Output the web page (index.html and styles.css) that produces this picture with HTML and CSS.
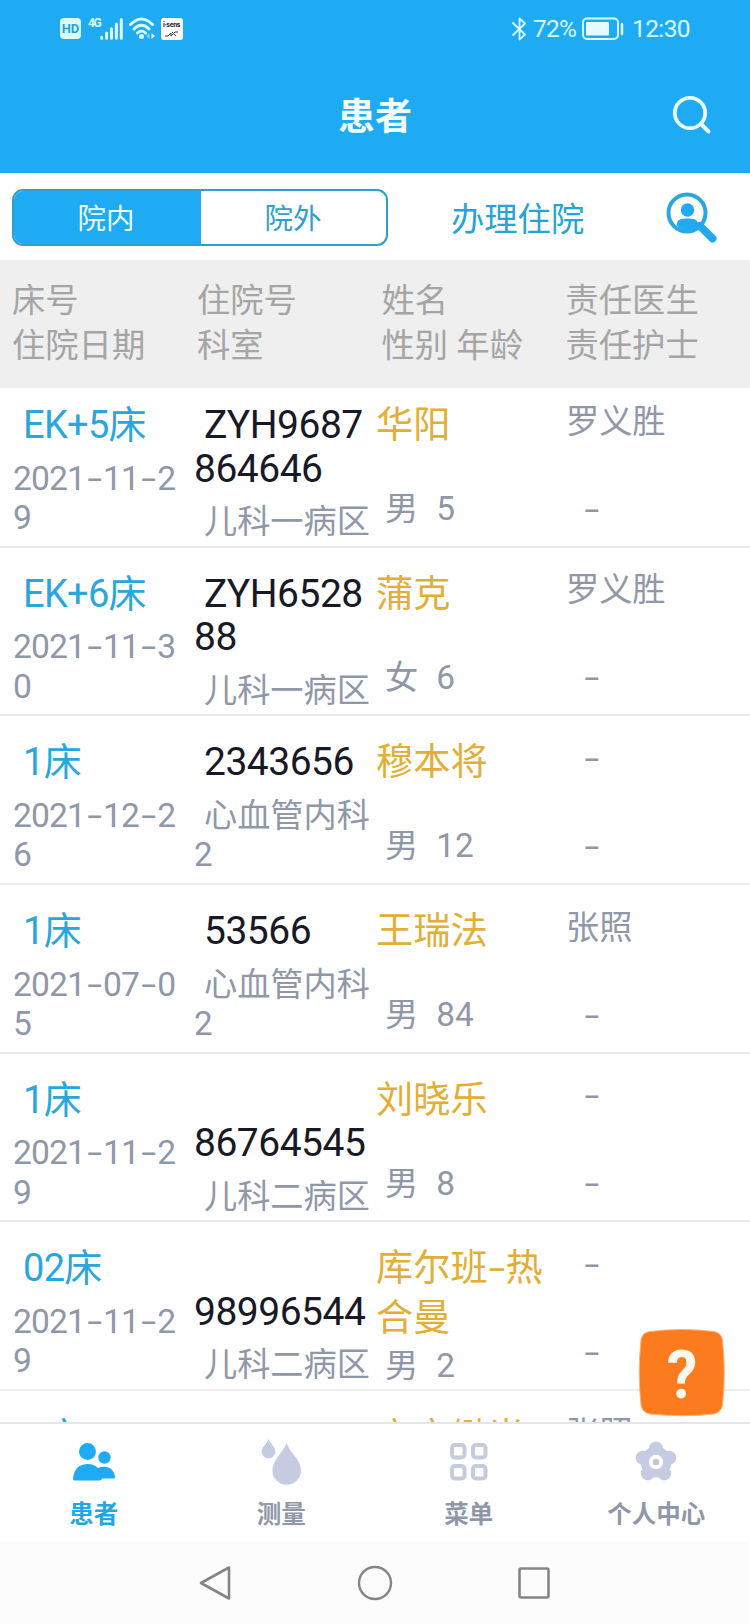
FILE: index.html
```html
<!DOCTYPE html>
<html lang="zh-CN">
<head>
    <meta charset="UTF-8">
    <meta name="viewport" content="width=device-width, initial-scale=1.0">
    <title>患者</title>
    <link rel="stylesheet" href="styles.css">
</head>
<body>
    <div class="top">
        <div class="status">
            <div class="status-left">
                <span class="hd">HD</span>
                <span class="net">4G</span>
                <svg class="signal" width="23" height="22" viewBox="0 0 23 22">
                    <path d="M1.7 19.2v1M6.6 15v5.3M11.5 10.800v9.500M16.400 6v14.300M21.300 1.500v18.800" stroke="#d9fbff" stroke-width="3" stroke-linecap="round"/>
                </svg>
                <svg class="wifi" width="27" height="23" viewBox="0 0 27 23">
                    <path d="M1.500 7.500Q12.500 -3.500 23.500 7.500M5 12Q12.500 4.500 20 12M8.500 16Q12.500 12 16.500 16" fill="none" stroke="#d9fbff" stroke-width="2.900" stroke-linecap="round"/>
                    <circle cx="12.500" cy="19.500" r="2.500" fill="#d9fbff"/>
                    <path d="M20.500 16v6l-3.500-3z" fill="#7fd3fa"/>
                    <path d="M22.500 16v6l3.500-3z" fill="#d9fbff"/>
                </svg>
                <span class="sens"><b>i·sens</b>
                    <svg width="18" height="6" viewBox="0 0 18 6"><path d="M2 5h3l3-3v3l4-4h3M9 1l4 4" fill="none" stroke="#334" stroke-width="1"/></svg>
                </span>
            </div>
            <div class="status-right">
                <svg width="16" height="24" viewBox="0 0 16 24">
                    <path d="M1.500 5.500L14 17.500L8.500 22.500V1.500L14 6.500L1.500 18.500" fill="none" stroke="#d9fbff" stroke-width="1.800" stroke-linejoin="round"/>
                </svg>
                <span class="percent">72%</span>
                <svg class="battery" width="42" height="24" viewBox="0 0 42 24">
                    <rect x="1" y="1.500" width="35" height="20.500" rx="4" fill="none" stroke="#d9fbff" stroke-width="2"/>
                    <rect x="4" y="5" width="23" height="13.500" rx="1" fill="#e6fbff"/>
                    <path d="M40 7v10" stroke="#d9fbff" stroke-width="2.500" stroke-linecap="round"/>
                </svg>
                <span class="clock">12:30</span>
            </div>
        </div>
        <div class="title-bar">
            <h1>患者</h1>
            <svg class="search" width="40" height="40" viewBox="0 0 40 40">
                <circle cx="18" cy="18" r="15.200" fill="none" stroke="#e9fdff" stroke-width="3.800"/>
                <path d="M29 29l7.500 7.500" stroke="#e9fdff" stroke-width="4" stroke-linecap="round"/>
            </svg>
        </div>
    </div>

    <div class="tools">
        <div class="switch">
            <div class="switch-item on">院内</div>
            <div class="switch-item">院外</div>
        </div>
        <a class="admit">办理住院</a>
        <svg class="find" width="52" height="52" viewBox="0 0 52 52">
            <circle cx="21" cy="21" r="18.500" fill="none" stroke="#2aa7e0" stroke-width="4"/>
            <circle cx="21.500" cy="18" r="6.700" fill="#1fabf3"/>
            <path d="M10.500 33c1-6 4.500-6.500 11-6.500s10 .500 11 6.500c-6 8-16 8-22 0z" fill="#1fabf3"/>
            <path d="M34 34l12.500 12.500" stroke="#22a9ea" stroke-width="8" stroke-linecap="round"/>
        </svg>
    </div>

    <div class="head">
        <div>床号<br>住院日期</div>
        <div>住院号<br>科室</div>
        <div>姓名<br>性别 年龄</div>
        <div>责任医生<br>责任护士</div>
    </div>

    <div class="list">
        <div class="rows">
            <div class="row">
                <div class="col"><div class="bed">EK+5床</div><div class="date">2021<i>-</i>11<i>-</i>2<br>9</div></div>
                <div class="col"><div class="num in">ZYH9687<br>864646</div><div class="dept">儿科一病区</div></div>
                <div class="col"><div class="name">华阳</div><div class="sex"><span>男</span><span>5</span></div></div>
                <div class="col"><div class="staff">罗义胜</div><div class="staff none"><i>-</i></div></div>
            </div>
            <div class="row">
                <div class="col"><div class="bed">EK+6床</div><div class="date">2021<i>-</i>11<i>-</i>3<br>0</div></div>
                <div class="col"><div class="num in">ZYH6528<br>88</div><div class="dept">儿科一病区</div></div>
                <div class="col"><div class="name">蒲克</div><div class="sex"><span>女</span><span>6</span></div></div>
                <div class="col"><div class="staff">罗义胜</div><div class="staff none"><i>-</i></div></div>
            </div>
            <div class="row">
                <div class="col"><div class="bed">1床</div><div class="date">2021<i>-</i>12<i>-</i>2<br>6</div></div>
                <div class="col"><div class="num in">2343656</div><div class="dept">心血管内科<br>2</div></div>
                <div class="col"><div class="name">穆本将</div><div class="sex"><span>男</span><span>12</span></div></div>
                <div class="col"><div class="staff none"><i>-</i></div><div class="staff none"><i>-</i></div></div>
            </div>
            <div class="row">
                <div class="col"><div class="bed">1床</div><div class="date">2021<i>-</i>07<i>-</i>0<br>5</div></div>
                <div class="col"><div class="num in">53566</div><div class="dept">心血管内科<br>2</div></div>
                <div class="col"><div class="name">王瑞法</div><div class="sex"><span>男</span><span>84</span></div></div>
                <div class="col"><div class="staff">张照</div><div class="staff none"><i>-</i></div></div>
            </div>
            <div class="row">
                <div class="col"><div class="bed">1床</div><div class="date">2021<i>-</i>11<i>-</i>2<br>9</div></div>
                <div class="col"><div class="num"><br>86764545</div><div class="dept">儿科二病区</div></div>
                <div class="col"><div class="name">刘晓乐</div><div class="sex"><span>男</span><span>8</span></div></div>
                <div class="col"><div class="staff none"><i>-</i></div><div class="staff none"><i>-</i></div></div>
            </div>
            <div class="row">
                <div class="col"><div class="bed">02床</div><div class="date">2021<i>-</i>11<i>-</i>2<br>9</div></div>
                <div class="col"><div class="num"><br>98996544</div><div class="dept">儿科二病区</div></div>
                <div class="col"><div class="name">库尔班<i>-</i>热<br>合曼</div><div class="sex"><span>男</span><span>2</span></div></div>
                <div class="col"><div class="staff none"><i>-</i></div><div class="staff none"><i>-</i></div></div>
            </div>
            <div class="row">
                <div class="col"><div class="bed">2床</div></div>
                <div class="col"><div class="num in">190</div></div>
                <div class="col"><div class="name">高宛缈肖</div></div>
                <div class="col"><div class="staff">张照</div></div>
            </div>
        </div>
    </div>

    <div class="help">
        <svg width="90" height="90" viewBox="0 0 90 90">
            <path d="M13 3.500Q45 -.500 77 3.500Q84 4.500 85.500 12Q89 45 85.500 77Q84.500 84 77 86Q45 89.500 13 86Q5 84.500 4 77Q.500 45 4 12Q5 4.500 13 3.500z" fill="#fb7b1e" stroke="#ffb27a" stroke-width="1"/>
        </svg>
        <span>?</span>
    </div>

    <div class="tabs">
        <div class="tab active">
            <svg width="48" height="48" viewBox="0 0 48 48">
                <g fill="#1fabf3">
                    <circle cx="17.500" cy="13.500" r="8.500"/>
                    <circle cx="34.500" cy="19.500" r="6.200"/>
                    <path d="M3 40.500C4 31 9 26 18 26c4 0 7 1.500 10 4 8-3.500 16 0 17 8.500 0 1.500-.500 2-2 2H32c-.500 1.500-1.500 2-3 2H5c-1.500 0-2-.500-2-2z"/>
                </g>
            </svg>
            <span>患者</span>
        </div>
        <div class="tab">
            <svg width="48" height="48" viewBox="0 0 48 48">
                <g fill="#c5cce1">
                    <path d="M11.500 1c1 4 7 7.500 7 12.500a6.900 6.900 0 0 1-13.800 0C4.700 8.500 10.500 5 11.500 1z"/>
                    <path d="M29.500 5c2 8 14.500 16.500 14.500 27.500a14.300 14.300 0 0 1-28.600 0C15.400 21.500 27.500 13 29.500 5z"/>
                </g>
            </svg>
            <span>测量</span>
        </div>
        <div class="tab">
            <svg width="48" height="48" viewBox="0 0 48 48">
                <g fill="none" stroke="#c5cadd" stroke-width="4">
                    <rect x="7" y="7" width="12.500" height="12.500" rx="3"/>
                    <rect x="28" y="7" width="12.500" height="12.500" rx="3"/>
                    <rect x="7" y="28" width="12.500" height="12.500" rx="3"/>
                    <rect x="28" y="28" width="12.500" height="12.500" rx="3"/>
                </g>
            </svg>
            <span>菜单</span>
        </div>
        <div class="tab">
            <svg width="48" height="48" viewBox="0 0 48 48">
                <!-- five lobes round a hub -->
                <g stroke="#c5cce1" stroke-width="14" stroke-linecap="round">
                    <path d="M24 24V10.500M24 24l13.300-4.300M24 24l8.200 11.300M24 24l-8.200 11.300M24 24l-13.300-4.300"/>
                </g>
                <circle cx="24" cy="24" r="15.500" fill="#c5cce1"/>
                <circle cx="24" cy="24" r="7.200" fill="#fff"/>
                <circle cx="24" cy="24" r="3.200" fill="#c0c5d6"/>
            </svg>
            <span>个人中心</span>
        </div>
    </div>

    <div class="nav">
        <svg width="36" height="38" viewBox="0 0 36 38"><path d="M31 3.500v31L3 19z" fill="none" stroke="#858585" stroke-width="2.600" stroke-linejoin="round"/></svg>
        <svg width="36" height="38" viewBox="0 0 36 38"><circle cx="18" cy="19" r="16" fill="none" stroke="#858585" stroke-width="2.400"/></svg>
        <svg width="36" height="38" viewBox="0 0 36 38"><rect x="3.500" y="4.500" width="29" height="29" rx="1.500" fill="none" stroke="#858585" stroke-width="2.600"/></svg>
    </div>
</body>
</html>
```

FILE: styles.css
```css
* {
    box-sizing: border-box;
}
body {
    margin: 0;
    width: 750px;
    height: 1624px;
    overflow: hidden;
    position: relative;
    display: flex;
    flex-direction: column;
    background-color: #fff;
    font-family: Roboto, "Noto Sans CJK SC", sans-serif;
    color: #8f97a8;
}
svg {
    display: block;
    flex: none;
}

/* header */
.top {
    height: 173px;
    background-color: #1fabf3;
    color: #d9fbff;
}
.status {
    height: 57px;
    padding: 0 60px 0 60px;
    display: flex;
    justify-content: space-between;
    align-items: center;
}
.status-left,
.status-right {
    display: flex;
    align-items: center;
}
.hd {
    width: 21px;
    height: 21px;
    border-radius: 4px;
    background-color: #d9fbff;
    color: #2a9fd6;
    font-size: 13px;
    font-weight: bold;
    line-height: 21px;
    text-align: center;
}
.net {
    margin: -12px 0 0 7px;
    width: 12px;
    font-size: 12px;
    line-height: 12px;
    font-weight: bold;
    letter-spacing: -1.5px;
}
.wifi {
    margin-left: 6px;
}
.sens {
    width: 22px;
    height: 22px;
    margin-left: 5px;
    padding: 2px;
    border-radius: 3px;
    background-color: #fff;
    color: #223;
}
.sens b {
    display: block;
    font-size: 7px;
    line-height: 11px;
    letter-spacing: -0.3px;
}
.percent {
    margin-left: 6px;
    width: 45px;
    font-size: 24.500px;
    letter-spacing: -0.8px;
}
.battery {
    margin-left: 4px;
}
.clock {
    margin-left: 8px;
    width: 58px;
    font-size: 24.500px;
    letter-spacing: -0.6px;
}
.title-bar {
    height: 116px;
    padding-right: 38px;
    display: flex;
    align-items: center;
}
.title-bar h1 {
    flex: 1;
    margin: 0;
    padding: 5px 0 0 78px;
    font-size: 37px;
    line-height: 50px;
    text-align: center;
    color: #f0feff;
}

/* toolbar */
.tools {
    height: 87px;
    padding: 16px 32px 14px 12px;
    display: flex;
    align-items: flex-start;
}
.switch {
    width: 376px;
    height: 57px;
    display: flex;
    border: 2px solid #2fa0cb;
    border-radius: 11px;
    overflow: hidden;
}
.switch-item {
    flex: 1;
    padding-right: 1px;
    font-size: 28.500px;
    line-height: 58px;
    text-align: center;
    color: #2fa0cb;
}
.switch-item.on {
    background-color: #1fabf3;
    color: #e9fdff;
    flex: 0 0 187px;
    padding-right: 3px;
}
.admit {
    margin-left: 63px;
    font-size: 33.300px;
    line-height: 61px;
    color: #27a3d6;
}
.find {
    margin: 3px 0 0 auto;
}

/* column titles */
.head {
    height: 128px;
    padding: 18px 0 0 12px;
    display: grid;
    grid-template-columns: 185px 184.500px 184px 1fr;
    background-color: #efefef;
    color: #a5a5a5;
    font-size: 33.300px;
    line-height: 45px;
}

/* patient list, scrolled a little under the titles */
.list {
    height: 1034px;
    overflow: hidden;
    flex: none;
}
.rows {
    margin-top: -9px;
}
.row {
    height: 168.700px;
    display: grid;
    grid-template-columns: 194px 182px 190px 1fr;
    border-bottom: 2px solid #ececee;
}
.col {
    padding-top: 25px;
    white-space: nowrap;
}
.row i {
    display: inline-block;
    width: 0.54em;
    font-style: normal;
    text-align: center;
    transform: scaleX(1.6);
}
.bed {
    padding-left: 23px;
    font-size: 38px;
    line-height: 43px;
    letter-spacing: -0.7px;
    color: #2ba6dc;
}
.date {
    margin-top: 11.500px;
    padding-left: 13px;
    font-size: 33.600px;
    line-height: 39.500px;
    letter-spacing: -0.9px;
}
.num {
    font-size: 39px;
    line-height: 43.500px;
    letter-spacing: -0.5px;
    color: #181826;
}
.num.in,
.dept {
    text-indent: 10px;
}
.dept {
    margin-top: 11px;
    font-size: 33.200px;
    line-height: 39.500px;
}
.name {
    min-height: 86px;
    margin-top: -4px;
    font-size: 37.200px;
    line-height: 50px;
    color: #e2ae35;
}
.name i {
    width: 0.48em;
}
.sex {
    padding-left: 9px;
    margin-top: 3px;
    display: flex;
    gap: 18px;
    font-size: 33.300px;
    line-height: 40px;
}
.staff {
    height: 40px;
    margin-top: -2.500px;
    font-size: 33.200px;
    line-height: 40px;
}
.staff + .staff {
    margin-top: 48px;
}
.staff.none {
    padding-left: 17px;
}

/* floating help button */
.help {
    position: absolute;
    left: 637px;
    top: 1327.500px;
    width: 90px;
    height: 90px;
}
.help span {
    position: absolute;
    left: 0;
    top: 2px;
    width: 90px;
    font-size: 67px;
    font-weight: bold;
    line-height: 90px;
    text-align: center;
    color: #fff8ee;
    transform: scaleX(0.92);
}

/* bottom tabs */
.tabs {
    height: 120px;
    border-top: 2px solid #e4e5e8;
    display: flex;
}
.tab {
    flex: 1;
    padding-top: 14px;
    display: flex;
    flex-direction: column;
    align-items: center;
    font-size: 24.500px;
    font-weight: bold;
    line-height: 36px;
}
.tab span {
    margin-top: 11px;
}
.tab.active {
    color: #27a5df;
}

/* system navigation */
.nav {
    flex: 1;
    display: flex;
    justify-content: center;
    align-items: center;
    gap: 123px;
    background-color: #fcfcfc;
}
```
